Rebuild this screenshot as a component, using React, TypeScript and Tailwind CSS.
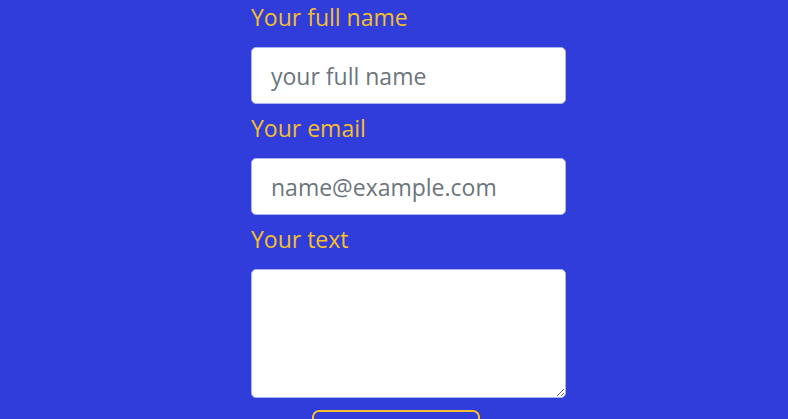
export default function App() {
  const font = { fontFamily: '"Open Sans", "Noto Sans", sans-serif' }
  return (
    <div className="min-h-[419px] w-full overflow-hidden bg-[#303dda]" style={font}>
      <form className="ml-[251px] flex w-[315px] flex-col">
        <label className="mb-[16px] block pt-[4px] text-[23px] leading-[27px] text-[#f6bf2b]">Your full name</label>
        <input
          className="mb-[7px] h-[57px] w-full rounded-[5px] border border-[#aab4ee] bg-white px-[19px] text-[23px] text-[#555] outline-none placeholder:text-[#6c757d]"
          placeholder="your full name"
        />
        <label className="mb-[16px] block pt-[4px] text-[23px] leading-[27px] text-[#f6bf2b]">Your email</label>
        <input
          className="mb-[7px] h-[57px] w-full rounded-[5px] border border-[#aab4ee] bg-white px-[19px] text-[23px] text-[#555] outline-none placeholder:text-[#6c757d]"
          placeholder="name@example.com"
        />
        <label className="mb-[16px] block pt-[4px] text-[23px] leading-[27px] text-[#f6bf2b]">Your text</label>
        <textarea className="mb-[12px] h-[129px] w-full rounded-[5px] border border-[#aab4ee] bg-white px-[19px] py-2 text-[23px] outline-none" />
        <button
          type="button"
          className="ml-[61px] h-[48px] w-[168px] rounded-[7px] border-2 border-[#f6bf2b] pt-[8px] text-[23px] text-[#f6bf2b]"
        >
          Send
        </button>
      </form>
    </div>
  )
}
